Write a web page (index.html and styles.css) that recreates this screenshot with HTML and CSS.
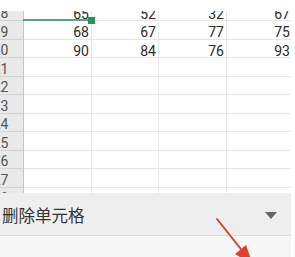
FILE: index.html
```html
<!DOCTYPE html>
<html lang="zh">
<head>
<meta charset="utf-8">
<link rel="stylesheet" href="styles.css">
</head>
<body>
<div class="screen">
  <div class="sheet">
    <div class="viewport">
      <div class="grid">
        <div class="rh">18</div><div class="c sel">65</div><div class="c">52</div><div class="c">32</div><div class="c">67</div>
        <div class="rh">19</div><div class="c">68</div><div class="c">67</div><div class="c">77</div><div class="c">75</div>
        <div class="rh">20</div><div class="c">90</div><div class="c">84</div><div class="c">76</div><div class="c">93</div>
        <div class="rh">21</div><div class="c"></div><div class="c"></div><div class="c"></div><div class="c"></div>
        <div class="rh">22</div><div class="c"></div><div class="c"></div><div class="c"></div><div class="c"></div>
        <div class="rh">23</div><div class="c"></div><div class="c"></div><div class="c"></div><div class="c"></div>
        <div class="rh">24</div><div class="c"></div><div class="c"></div><div class="c"></div><div class="c"></div>
        <div class="rh">25</div><div class="c"></div><div class="c"></div><div class="c"></div><div class="c"></div>
        <div class="rh">26</div><div class="c"></div><div class="c"></div><div class="c"></div><div class="c"></div>
        <div class="rh">27</div><div class="c"></div><div class="c"></div><div class="c"></div><div class="c"></div>
        <div class="rh">28</div><div class="c"></div><div class="c"></div><div class="c"></div><div class="c"></div>
      </div>
    </div>
  </div>
  <div class="panel">
    <div class="panel-row">
      <span class="label">删除单元格</span>
      <span class="caret"></span>
    </div>
    <div class="panel-rest"></div>
  </div>
  <svg class="arrow" width="291" height="257" viewBox="0 0 291 257">
    <line x1="217" y1="219" x2="244" y2="253" stroke="#d8432f" stroke-width="2" stroke-linecap="round"/>
    <polygon points="253,265 246,245 235,254" fill="#d8432f"/>
  </svg>
</div>
</body>
</html>
```
FILE: styles.css
```css
html, body {
  margin: 0;
  padding: 0;
  background: #ffffff;
}
body {
  width: 295px;
  height: 257px;
  overflow: hidden;
  font-family: Roboto, "Liberation Sans", "Noto Sans CJK SC", sans-serif;
}
.screen {
  position: relative;
  width: 291px;
  height: 257px;
  overflow: hidden;
  display: flex;
  flex-direction: column;
}
.sheet {
  height: 193px;
  padding-top: 11px;
  box-sizing: border-box;
  flex: none;
  background: #fff;
}
.viewport {
  height: 182px;
  overflow: hidden;
}
.grid {
  display: grid;
  grid-template-columns: 46px 68px 67px 68px 66px;
  grid-auto-rows: 18.5px;
  margin-top: -8.5px;
  margin-left: -22px;
}
.rh {
  background: #e9e9e9;
  border-bottom: 1px solid #d2d2d2;
  border-right: 1px solid #c4c4c4;
  box-sizing: border-box;
  color: #555;
  font-size: 14px;
  display: flex;
  align-items: center;
  justify-content: center;
  padding-top: 4px;
}
.c {
  border-bottom: 1px solid #e4e4e4;
  border-right: 1px solid #e8e8e8;
  box-sizing: border-box;
  color: #2b2b2b;
  font-size: 14px;
  display: flex;
  align-items: center;
  justify-content: flex-end;
  padding: 5px 2px 0 0;
  position: relative;
}
.sel::after {
  content: "";
  position: absolute;
  left: -1px;
  right: -1px;
  bottom: -1px;
  height: 2px;
  background: #5aa57c;
}
.sel::before {
  content: "";
  position: absolute;
  right: -4px;
  bottom: -4px;
  width: 7px;
  height: 7px;
  background: #2e9358;
  z-index: 2;
}
.panel {
  flex: 1;
  display: flex;
  flex-direction: column;
  background: #f5f5f5;
}
.panel-row {
  height: 42px;
  display: flex;
  align-items: center;
  justify-content: space-between;
  padding-left: 2px;
  padding-right: 14px;
  background: #eeeeee;
  border-bottom: 1px solid #dedede;
}
.label {
  font-family: "Noto Sans CJK SC", sans-serif;
  font-size: 16.5px;
  color: #333;
  padding-top: 2px;
}
.caret {
  width: 0;
  height: 0;
  border-left: 6.5px solid transparent;
  border-right: 6.5px solid transparent;
  border-top: 7px solid #666;
  margin-top: 3px;
}
.panel-rest {
  flex: 1;
  background: #f6f6f6;
}
.arrow {
  position: absolute;
  left: 0;
  top: 0;
  pointer-events: none;
}
```
